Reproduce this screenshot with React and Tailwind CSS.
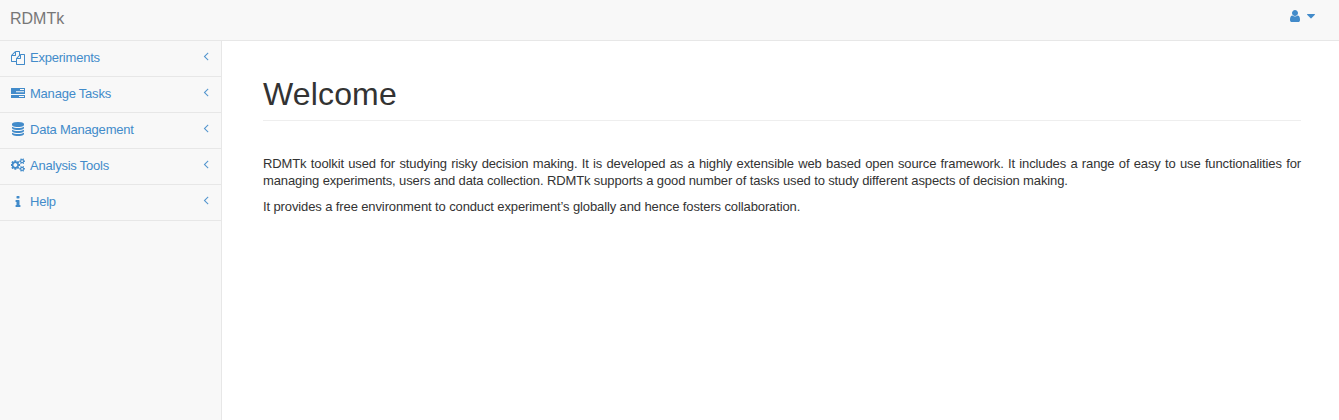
const PATHS = {
  files:
    "M1696 384q40 0 68 28t28 68v1216q0 40-28 68t-68 28h-960q-40 0-68-28t-28-68v-288h-544q-40 0-68-28t-28-68v-672q0-40 20-88t48-76l408-408q28-28 76-48t88-20h416q40 0 68 28t28 68v328q68-40 128-40h416zm-544 213l-299 299h299v-299zm-640-384l-299 299h299v-299zm196 647l316-316v-416h-384v416q0 40-28 68t-68 28h-416v640h512v-256q0-40 20-88t48-76zm956 804v-1152h-384v416q0 40-28 68t-68 28h-416v640h896z",
  tasks:
    "M.3 1h13.4q.3 0 .3.3v5.4q0 .3-.3.3H.3q-.3 0-.3-.3V1.3Q0 1 .3 1zM9 2v1h4v-1zM5 4.2v1h8v-1zM.3 8h13.4q.3 0 .3.3v2.5q0 .3-.3.3H.3q-.3 0-.3-.3V8.3Q0 8 .3 8zM8 9v1h5v-1z",
  database:
    "M896 768q237 0 443-43t325-127v170q0 69-103 128t-280 93.5-385 34.5-385-34.5-280-93.5-103-128v-170q119 84 325 127t443 43zm0 768q237 0 443-43t325-127v170q0 69-103 128t-280 93.5-385 34.5-385-34.5-280-93.5-103-128v-170q119 84 325 127t443 43zm0-384q237 0 443-43t325-127v170q0 69-103 128t-280 93.5-385 34.5-385-34.5-280-93.5-103-128v-170q119 84 325 127t443 43zm0-1152q208 0 385 34.5t280 93.5 103 128v128q0 69-103 128t-280 93.5-385 34.5-385-34.5-280-93.5-103-128v-128q0-69 103-128t280-93.5 385-34.5z",
  cogs:
    "M832 896q0-106-75-181t-181-75-181 75-75 181 75 181 181 75 181-75 75-181zm768 512q0-52-38-90t-90-38-90 38-38 90q0 53 37.5 90.5t90.5 37.5 90.5-37.5 37.5-90.5zm0-1024q0-52-38-90t-90-38-90 38-38 90q0 53 37.5 90.5t90.5 37.5 90.5-37.5 37.5-90.5zm-384 421v185q0 10-7 19.5t-16 10.5l-155 24q-11 35-32 76 34 48 90 115 7 11 7 20 0 12-7 19-23 30-82.5 89.5t-78.5 59.5q-11 0-21-7l-115-90q-37 19-77 31-11 108-23 155-7 24-30 24h-186q-11 0-20-7.5t-10-17.5l-23-153q-34-10-75-31l-118 89q-7 7-20 7-11 0-21-8-144-133-144-160 0-9 7-19 10-14 41-53t47-61q-23-44-35-82l-152-24q-10-1-17-9.5t-7-19.5v-185q0-10 7-19.5t16-10.5l155-24q11-35 32-76-34-48-90-115-7-11-7-20 0-12 7-20 22-30 82-89t79-59q11 0 21 7l115 90q34-18 77-32 11-108 23-154 7-24 30-24h186q11 0 20 7.5t10 17.5l23 153q34 10 75 31l118-89q8-7 20-7 11 0 21 8 144 133 144 160 0 8-7 19-12 16-42 54t-45 60q23 48 34 82l152 23q10 2 17 10.5t7 19.5zm640 533v140q0 16-149 31-12 27-30 52 51 113 51 138 0 4-4 7-122 71-124 71-8 0-46-47t-52-68q-20 2-30 2t-30-2q-14 21-52 68t-46 47q-2 0-124-71-4-3-4-7 0-25 51-138-18-25-30-52-149-15-149-31v-140q0-16 149-31 13-29 30-52-51-113-51-138 0-4 4-7 4-2 35-20t59-34 30-16q8 0 46 46.5t52 67.5q20-2 30-2t30 2q51-71 92-112l6-2q4 0 124 70 4 3 4 7 0 25-51 138 17 23 30 52 149 15 149 31zm0-1024v140q0 16-149 31-12 27-30 52 51 113 51 138 0 4-4 7-122 71-124 71-8 0-46-47t-52-68q-20 2-30 2t-30-2q-14 21-52 68t-46 47q-2 0-124-71-4-3-4-7 0-25 51-138-18-25-30-52-149-15-149-31v-140q0-16 149-31 13-29 30-52-51-113-51-138 0-4 4-7 4-2 35-20t59-34 30-16q8 0 46 46.5t52 67.5q20-2 30-2t30 2q51-71 92-112l6-2q4 0 124 70 4 3 4 7 0 25-51 138 17 23 30 52 149 15 149 31z",
  info:
    "M1216 1344v128q0 26-19 45t-45 19h-512q-26 0-45-19t-19-45v-128q0-26 19-45t45-19h64v-384h-64q-26 0-45-19t-19-45v-128q0-26 19-45t45-19h384q26 0 45 19t19 45v576h64q26 0 45 19t19 45zm-128-1152v192q0 26-19 45t-45 19h-256q-26 0-45-19t-19-45v-192q0-26 19-45t45-19h256q26 0 45 19t19 45z",
  user:
    "M1536 1399q0 109-62.5 187t-150.5 78h-854q-88 0-150.5-78t-62.5-187q0-85 8.5-160.5t31.5-152 58.5-131 94-89 134.5-34.5q131 128 313 128t313-128q76 0 134.5 34.5t94 89 58.5 131 31.5 152 8.5 160.5zm-256-887q0 159-112.5 271.5t-271.5 112.5-271.5-112.5-112.5-271.5 112.5-271.5 271.5-112.5 271.5 112.5 112.5 271.5z",
  caret:
    "M1408 704q0 26-19 45l-448 448q-19 19-45 19t-45-19l-448-448q-19-19-19-45t19-45 45-19h896q26 0 45 19t19 45z",
  left:
    "M1203 544q0 13-10 23l-393 393 393 393q10 10 10 23t-10 23l-50 50q-10 10-23 10t-23-10l-466-466q-10-10-10-23t10-23l466-466q10-10 23-10t23 10l50 50q10 10 10 23z",
};

const VIEW_BOXES = { cogs: "0 0 1856 1792", tasks: "0 0 14 14" };

function Icon({ name, className = "" }) {
  return (
    <svg
      viewBox={VIEW_BOXES[name] ?? "0 0 1792 1792"}
      fill="currentColor"
      fillRule={name === "tasks" ? "evenodd" : "nonzero"}
      aria-hidden="true"
      className={`size-[14px] shrink-0 ${className}`}
    >
      <path d={PATHS[name]} />
    </svg>
  );
}

const MENU = [
  ["files", "Experiments", ""],
  ["tasks", "Manage Tasks", ""],
  ["database", "Data Management", "-mt-px"],
  ["cogs", "Analysis Tools", "-mt-px"],
  ["info", "Help", ""],
];

export default function App() {
  return (
    <div className="flex h-[420px] flex-col overflow-hidden bg-white font-['Liberation_Sans',Arial,sans-serif] text-[13px] text-[#333]">
      <header className="flex h-[41px] shrink-0 justify-between border-b border-[#e7e7e7] bg-[#f8f8f8]">
        <a href="#" className="pt-[8.5px] pl-[10px] text-[16px] leading-5 text-[#777]">
          RDMTk
        </a>
        <a href="#" className="flex gap-[2px] pt-[9px] pr-[21px] text-[#428bca]">
          <Icon name="user" />
          <Icon name="caret" />
        </a>
      </header>
      <div className="flex min-h-0 flex-1">
        <nav className="w-[222px] shrink-0 border-r border-[#e7e7e7] bg-[#f8f8f8]">
          {MENU.map(([icon, label, nudge]) => (
            <a
              key={label}
              href="#"
              className="flex h-9 border-b border-[#e7e7e7] pt-[10px] pr-[8px] pl-[11px] text-[#428bca]"
            >
              <Icon name={icon} className={nudge} />
              <span className="ml-[5px] flex-1 leading-[14px] tracking-[-0.22px]">{label}</span>
              <Icon name="left" className="-mt-[2.5px] opacity-90" />
            </a>
          ))}
        </nav>
        <main className="flex-1 pt-[34px] pr-[38px] pl-[41px]">
          <h1 className="h-[46px] border-b border-[#eee] text-[32px] leading-[38px] tracking-[0.15px]">Welcome</h1>
          <p className="mt-[34px] text-justify leading-[17px] tracking-[-0.12px]">
            RDMTk toolkit used for studying risky decision making. It is developed as a highly extensible web based open
            source framework. It includes a range of easy to use functionalities for managing experiments, users and
            data collection. RDMTk supports a good number of tasks used to study different aspects of decision making.
          </p>
          <p className="mt-[9px] leading-[17px] tracking-[-0.115px]">
            It provides a free environment to conduct experiment’s globally and hence fosters collaboration.
          </p>
        </main>
      </div>
    </div>
  );
}
